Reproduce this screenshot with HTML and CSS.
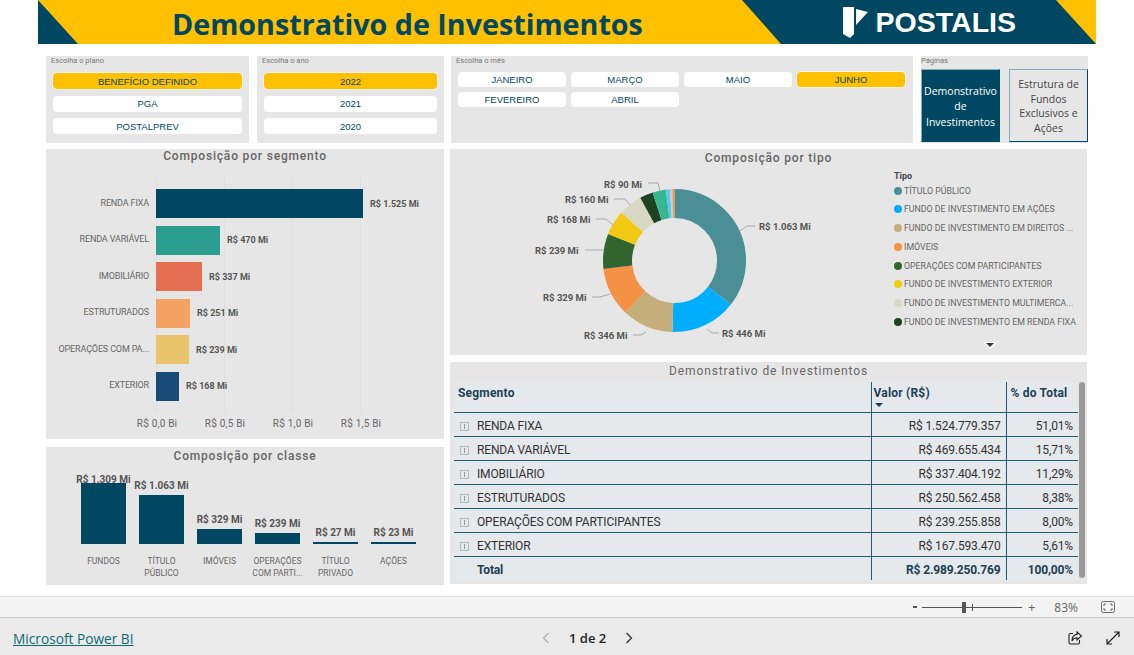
FILE: index.html
```html
<!DOCTYPE html>
<html lang="pt-BR">
<head>
    <meta charset="UTF-8">
    <title>Demonstrativo de Investimentos</title>
    <link rel="stylesheet" href="styles.css">
</head>
<body>
    <main class="report">
        <header class="banner">
            <svg class="banner-bg" viewBox="0 0 1058 44" width="1058" height="44">
                <polygon points="0,0 40,44 0,44" fill="#004761"/>
                <polygon points="704,0 1018,0 1058,44 743,44" fill="#004761"/>
            </svg>
            <h1>Demonstrativo de Investimentos</h1>
            <div class="logo">
                <svg width="26" height="31" viewBox="0 0 26 31">
                    <polygon points="0,0 11,0 11,27 7,31 0,27" fill="#fff"/>
                    <polygon points="13,2 25,5 13,18" fill="#fff"/>
                </svg>
                <span>POSTALIS</span>
            </div>
        </header>

        <section class="filters">
            <div class="box plano">
                <div class="box-label">Escolha o plano</div>
                <div class="slicer-col">
                    <button class="on">BENEFÍCIO DEFINIDO</button>
                    <button>PGA</button>
                    <button>POSTALPREV</button>
                </div>
            </div>
            <div class="box ano">
                <div class="box-label">Escolha o ano</div>
                <div class="slicer-col">
                    <button class="on">2022</button>
                    <button>2021</button>
                    <button>2020</button>
                </div>
            </div>
            <div class="box mes">
                <div class="box-label">Escolha o mês</div>
                <div class="slicer-grid">
                    <button>JANEIRO</button>
                    <button>MARÇO</button>
                    <button>MAIO</button>
                    <button class="on">JUNHO</button>
                    <button>FEVEREIRO</button>
                    <button>ABRIL</button>
                </div>
            </div>
            <div class="box paginas">
                <div class="box-label">Páginas</div>
                <div class="page-tabs">
                    <div class="tab active">Demonstrativo de Investimentos</div>
                    <div class="tab">Estrutura de Fundos Exclusivos e Ações</div>
                </div>
            </div>
        </section>

        <section class="columns">
            <div class="col-left">
                <div class="box segmento">
                    <h2>Composição por segmento</h2>
                    <div class="plot">
                        <div class="gridlines"><i></i><i></i><i></i><i></i></div>
                        <div class="hbar"><span class="cat">RENDA FIXA</span><b style="width:207px;background:#004761"></b><span class="val">R$ 1.525 Mi</span></div>
                        <div class="hbar"><span class="cat">RENDA VARIÁVEL</span><b style="width:64px;background:#2a9d8f"></b><span class="val">R$ 470 Mi</span></div>
                        <div class="hbar"><span class="cat">IMOBILIÁRIO</span><b style="width:46px;background:#e76f51"></b><span class="val">R$ 337 Mi</span></div>
                        <div class="hbar"><span class="cat">ESTRUTURADOS</span><b style="width:34px;background:#f4a261"></b><span class="val">R$ 251 Mi</span></div>
                        <div class="hbar"><span class="cat">OPERAÇÕES COM PA...</span><b style="width:33px;background:#e9c46a"></b><span class="val">R$ 239 Mi</span></div>
                        <div class="hbar"><span class="cat">EXTERIOR</span><b style="width:23px;background:#1a4b78"></b><span class="val">R$ 168 Mi</span></div>
                    </div>
                    <div class="axis">
                        <span>R$ 0,0 Bi</span><span>R$ 0,5 Bi</span><span>R$ 1,0 Bi</span><span>R$ 1,5 Bi</span>
                    </div>
                </div>
                <div class="box classe">
                    <h2>Composição por classe</h2>
                    <div class="vbars">
                        <div class="vbar tight"><span>R$ 1.309 Mi</span><b style="height:61px"></b></div>
                        <div class="vbar"><span>R$ 1.063 Mi</span><b style="height:49px"></b></div>
                        <div class="vbar"><span>R$ 329 Mi</span><b style="height:15px"></b></div>
                        <div class="vbar"><span>R$ 239 Mi</span><b style="height:11px"></b></div>
                        <div class="vbar"><span>R$ 27 Mi</span><b style="height:2px"></b></div>
                        <div class="vbar"><span>R$ 23 Mi</span><b style="height:2px"></b></div>
                    </div>
                    <div class="vcats">
                        <span>FUNDOS</span>
                        <span>TÍTULO PÚBLICO</span>
                        <span>IMÓVEIS</span>
                        <span>OPERAÇÕES COM PARTI...</span>
                        <span>TÍTULO PRIVADO</span>
                        <span>AÇÕES</span>
                    </div>
                </div>
            </div>

            <div class="col-right">
                <div class="box tipo">
                    <h2>Composição por tipo</h2>
                    <svg class="donut" width="440" height="206" viewBox="0 0 440 206">
                        <g fill="none" stroke-width="29" transform="rotate(-90 224.5 110.5)">
                            <circle cx="224.5" cy="110.5" r="57" pathLength="2989" stroke="#4a8f96" stroke-dasharray="1063 2989"/>
                            <circle cx="224.5" cy="110.5" r="57" pathLength="2989" stroke="#00aeff" stroke-dasharray="446 2989" stroke-dashoffset="-1063"/>
                            <circle cx="224.5" cy="110.5" r="57" pathLength="2989" stroke="#c4af7b" stroke-dasharray="346 2989" stroke-dashoffset="-1509"/>
                            <circle cx="224.5" cy="110.5" r="57" pathLength="2989" stroke="#f59145" stroke-dasharray="329 2989" stroke-dashoffset="-1855"/>
                            <circle cx="224.5" cy="110.5" r="57" pathLength="2989" stroke="#33662f" stroke-dasharray="239 2989" stroke-dashoffset="-2184"/>
                            <circle cx="224.5" cy="110.5" r="57" pathLength="2989" stroke="#f2ca13" stroke-dasharray="168 2989" stroke-dashoffset="-2423"/>
                            <circle cx="224.5" cy="110.5" r="57" pathLength="2989" stroke="#d9d9c3" stroke-dasharray="160 2989" stroke-dashoffset="-2591"/>
                            <circle cx="224.5" cy="110.5" r="57" pathLength="2989" stroke="#1f4222" stroke-dasharray="90 2989" stroke-dashoffset="-2751"/>
                            <circle cx="224.5" cy="110.5" r="57" pathLength="2989" stroke="#36b792" stroke-dasharray="90 2989" stroke-dashoffset="-2841"/>
                            <circle cx="224.5" cy="110.5" r="57" pathLength="2989" stroke="#5cc8f0" stroke-dasharray="27 2989" stroke-dashoffset="-2931"/>
                            <circle cx="224.5" cy="110.5" r="57" pathLength="2989" stroke="#c9ccc8" stroke-dasharray="17 2989" stroke-dashoffset="-2958"/>
                            <circle cx="224.5" cy="110.5" r="57" pathLength="2989" stroke="#f59145" stroke-dasharray="14 2989" stroke-dashoffset="-2975"/>
                        </g>
                        <g fill="none" stroke="#aaa">
                            <polyline points="290,81 297,76 305,76"/>
                            <polyline points="257,179 262,183 269,183"/>
                            <polyline points="196,182 191,185 183,185"/>
                            <polyline points="160,144 150,147 142,147"/>
                            <polyline points="153,100 135,100"/>
                            <polyline points="163,75 156,69 146,69"/>
                            <polyline points="180,55 175,49 164,49"/>
                            <polyline points="210,41 208,33 198,33"/>
                        </g>
                        <g class="slice-labels">
                            <text x="309" y="80">R$ 1.063 Mi</text>
                            <text x="272" y="187">R$ 446 Mi</text>
                            <text x="134" y="189">R$ 346 Mi</text>
                            <text x="93" y="151">R$ 329 Mi</text>
                            <text x="85" y="104">R$ 239 Mi</text>
                            <text x="97" y="73">R$ 168 Mi</text>
                            <text x="115" y="53">R$ 160 Mi</text>
                            <text x="154" y="38">R$ 90 Mi</text>
                        </g>
                    </svg>
                    <div class="legend">
                        <div class="legend-title">Tipo</div>
                        <ul>
                            <li><i style="background:#4a8f96"></i>TÍTULO PÚBLICO</li>
                            <li><i style="background:#00aeff"></i>FUNDO DE INVESTIMENTO EM AÇÕES</li>
                            <li><i style="background:#c4af7b"></i>FUNDO DE INVESTIMENTO EM DIREITOS ...</li>
                            <li><i style="background:#f59145"></i>IMÓVEIS</li>
                            <li><i style="background:#33662f"></i>OPERAÇÕES COM PARTICIPANTES</li>
                            <li><i style="background:#f2ca13"></i>FUNDO DE INVESTIMENTO EXTERIOR</li>
                            <li><i style="background:#d9d9c3"></i>FUNDO DE INVESTIMENTO MULTIMERCA...</li>
                            <li><i style="background:#1f4222"></i>FUNDO DE INVESTIMENTO EM RENDA FIXA</li>
                        </ul>
                        <svg class="legend-more" width="14" height="8" viewBox="0 0 14 8">
                            <polygon points="0,0 14,0 7,8" fill="#fff"/>
                            <polygon points="3,1 11,1 7,5" fill="#333"/>
                        </svg>
                    </div>
                </div>
                <div class="box demo">
                    <h2>Demonstrativo de Investimentos</h2>
                    <div class="table-wrap">
                        <table>
                            <thead>
                                <tr>
                                    <th class="c-seg">Segmento</th>
                                    <th class="c-val">Valor (R$)<svg class="sort" width="8" height="4" viewBox="0 0 8 4"><polygon points="0,0 8,0 4,4" fill="#1d3f55"/></svg></th>
                                    <th class="c-pct">% do Total</th>
                                </tr>
                            </thead>
                            <tbody>
                                <tr><td class="c-seg"><span class="expand"></span>RENDA FIXA</td><td class="c-val">R$ 1.524.779.357</td><td class="c-pct">51,01%</td></tr>
                                <tr><td class="c-seg"><span class="expand"></span>RENDA VARIÁVEL</td><td class="c-val">R$ 469.655.434</td><td class="c-pct">15,71%</td></tr>
                                <tr><td class="c-seg"><span class="expand"></span>IMOBILIÁRIO</td><td class="c-val">R$ 337.404.192</td><td class="c-pct">11,29%</td></tr>
                                <tr><td class="c-seg"><span class="expand"></span>ESTRUTURADOS</td><td class="c-val">R$ 250.562.458</td><td class="c-pct">8,38%</td></tr>
                                <tr><td class="c-seg"><span class="expand"></span>OPERAÇÕES COM PARTICIPANTES</td><td class="c-val">R$ 239.255.858</td><td class="c-pct">8,00%</td></tr>
                                <tr><td class="c-seg"><span class="expand"></span>EXTERIOR</td><td class="c-val">R$ 167.593.470</td><td class="c-pct">5,61%</td></tr>
                                <tr class="total"><td class="c-seg">Total</td><td class="c-val">R$ 2.989.250.769</td><td class="c-pct">100,00%</td></tr>
                            </tbody>
                        </table>
                        <div class="scrollbar"></div>
                    </div>
                </div>
            </div>
        </section>
    </main>

    <div class="zoom-bar">
        <span class="zoom-minus"></span>
        <div class="slider"><span class="tick"></span><span class="thumb"></span></div>
        <span class="zoom-plus">+</span>
        <span class="zoom-pct">83%</span>
        <svg class="fit" width="14" height="12" viewBox="0 0 14 12" fill="none" stroke="#666">
            <rect x="0.5" y="0.5" width="13" height="11" rx="2"/>
            <path d="M3 5V3H5M9 3H11V5M11 7V9H9M5 9H3V7"/>
        </svg>
    </div>

    <footer class="footer">
        <a class="pbi-link">Microsoft Power BI</a>
        <div class="pager">
            <svg width="8" height="12" viewBox="0 0 8 12" fill="none" stroke="#b5b5b5" stroke-width="1.3"><path d="M6.5 1L1.5 6L6.5 11"/></svg>
            <span>1 de 2</span>
            <svg width="8" height="12" viewBox="0 0 8 12" fill="none" stroke="#333" stroke-width="1.3"><path d="M1.5 1L6.5 6L1.5 11"/></svg>
        </div>
        <div class="footer-icons">
            <svg width="14" height="14" viewBox="0 0 14 14" fill="none" stroke="#222" stroke-width="1.1">
                <path d="M5 2.5H2.5A1.5 1.5 0 0 0 1 4V11.5A1.5 1.5 0 0 0 2.5 13H10A1.5 1.5 0 0 0 11.5 11.5V9"/>
                <path d="M9 1L13.5 5L9 9V6.8C6.5 6.8 5 8 4 10C4 6.5 6 3.8 9 3.4Z"/>
            </svg>
            <svg width="14" height="14" viewBox="0 0 14 14" fill="none" stroke="#222" stroke-width="1.2">
                <path d="M1 13L13 1M8 1H13V6M1 8V13H6"/>
            </svg>
        </div>
    </footer>
</body>
</html>
```

FILE: styles.css
```css
* {
    box-sizing: border-box;
}
html, body {
    margin: 0;
    height: 100%;
}
body {
    width: 1134px;
    height: 655px;
    overflow: hidden;
    display: flex;
    flex-direction: column;
    background-color: white;
    font-family: Roboto, sans-serif;
    color: #555;
}
.report {
    height: 596px;
}

/* Faixa do topo */
.banner {
    position: relative;
    width: 1058px;
    height: 44px;
    margin-left: 38px;
    background-color: #ffc000;
    display: flex;
    align-items: center;
}
.banner-bg {
    position: absolute;
    left: 0;
    top: 0;
}
.banner h1 {
    position: relative;
    margin: 2px 0 0 134px;
    font-family: "Open Sans", sans-serif;
    font-size: 28.7px;
    font-weight: 700;
    color: #004761;
    white-space: nowrap;
}
.logo {
    position: relative;
    margin-left: auto;
    margin-right: 80px;
    display: flex;
    align-items: center;
    gap: 7px;
}
.logo svg {
    margin-top: 1px;
}
.logo span {
    font-family: "Liberation Sans", sans-serif;
    font-size: 28.5px;
    font-weight: 700;
    color: white;
}

/* Filtros */
.box {
    background-color: #e6e6e6;
}
.filters {
    display: flex;
    height: 87px;
    margin: 12px 0 6px 46px;
}
.box-label {
    font-size: 7.5px;
    line-height: 9px;
    color: #777;
}
.filters button {
    height: 16px;
    padding: 0;
    border: none;
    border-radius: 4px;
    background-color: white;
    font-family: "Liberation Sans", sans-serif;
    font-size: 9.5px;
    color: #004761;
}
.filters button.on {
    background-color: #ffc000;
    box-shadow: 0 0 0 1px #f5f5f5;
}
.plano {
    width: 203px;
    padding: 0 7px 0 5px;
    margin-right: 8px;
}
.ano {
    width: 187px;
    padding: 0 7px 0 5px;
    margin-right: 7px;
}
.slicer-col {
    display: flex;
    flex-direction: column;
    gap: 6.5px;
    margin: 8px 0 0 2px;
}
.mes {
    width: 462px;
    padding-left: 5px;
    margin-right: 8px;
}
.slicer-grid {
    display: grid;
    grid-template-columns: repeat(4, 108px);
    grid-template-rows: 15px 15px;
    gap: 5px 5px;
    margin: 7px 0 0 2px;
}
.slicer-grid button {
    height: 15px;
}
.slicer-grid button:nth-child(5) {
    grid-column: 1;
    grid-row: 2;
}
.slicer-grid button:nth-child(6) {
    grid-column: 2;
    grid-row: 2;
}
.paginas {
    width: 167px;
}
.page-tabs {
    display: flex;
    justify-content: space-between;
    margin-top: 4px;
}
.tab {
    width: 79px;
    height: 73px;
    display: flex;
    align-items: center;
    justify-content: center;
    text-align: center;
    font-family: "Open Sans", sans-serif;
    font-size: 10.5px;
    line-height: 14.5px;
    color: #444;
    padding: 1px 5px 0;
    border: 1px solid #8aa9b5;
    border-bottom-color: #004761;
    border-right-color: #004761;
}
.tab.active {
    background-color: #004761;
    color: white;
    padding: 3px 2px 0;
    line-height: 15.5px;
}

/* Colunas principais */
.columns {
    display: flex;
    gap: 6px;
    margin-left: 46px;
}
.col-left {
    width: 398px;
    display: flex;
    flex-direction: column;
    gap: 8px;
}
.col-right {
    width: 637px;
    display: flex;
    flex-direction: column;
    gap: 7px;
}
h2 {
    margin: 0;
    text-align: center;
    font-size: 12px;
    line-height: 16px;
    font-weight: 500;
    letter-spacing: 0.82px;
    color: #666;
}

/* Barras horizontais */
.segmento {
    height: 290px;
}
.segmento h2 {
    margin-top: -1px;
}
.plot {
    position: relative;
    margin-top: 25px;
    display: flex;
    flex-direction: column;
    gap: 7.5px;
}
.gridlines {
    position: absolute;
    left: 110px;
    top: -13px;
    width: 205px;
    height: 237px;
    display: flex;
    justify-content: space-between;
}
.gridlines i {
    width: 0;
    border-left: 1px dotted #d8d8d8;
}
.hbar {
    position: relative;
    height: 29px;
    display: flex;
    align-items: center;
}
.hbar .cat {
    width: 103px;
    text-align: right;
    font-size: 9px;
    letter-spacing: -0.15px;
    padding-bottom: 2px;
    color: #666;
    white-space: nowrap;
    margin-right: 7px;
}
.hbar b {
    height: 29px;
    display: block;
}
.hbar .val {
    margin-left: 7px;
    font-size: 9px;
    font-weight: 700;
    color: #555;
}
.axis {
    display: flex;
    margin: 17px 0 0 77px;
}
.axis span {
    width: 68px;
    text-align: center;
    font-size: 10px;
    letter-spacing: 0.2px;
    color: #666;
}

/* Barras verticais */
.classe {
    height: 138px;
    padding-top: 1px;
}
.vbars {
    height: 75px;
    margin: 5px 0 0 35px;
    display: flex;
    gap: 13px;
    align-items: flex-end;
}
.vbar {
    width: 45px;
    display: flex;
    flex-direction: column;
    align-items: center;
}
.vbar span {
    font-size: 10px;
    font-weight: 700;
    line-height: 12px;
    white-space: nowrap;
    margin-bottom: 3px;
}
.vbar.tight span {
    margin-bottom: -3px;
    position: relative;
}
.vbar b {
    display: block;
    width: 45px;
    background-color: #004761;
}
.vcats {
    display: flex;
    gap: 3px;
    margin: 11px 0 0 30px;
}
.vcats span {
    width: 55px;
    text-align: center;
    font-size: 8.5px;
    line-height: 12px;
    color: #666;
}

/* Rosca */
.tipo {
    position: relative;
    height: 206px;
    padding-top: 1px;
    display: flex;
}
.tipo h2 {
    position: absolute;
    left: 0;
    right: 0;
    top: 1px;
}
.donut {
    flex: none;
}
.slice-labels text {
    font-family: Roboto, sans-serif;
    font-size: 9.5px;
    font-weight: 700;
    fill: #555;
}
.legend {
    margin: 21px 0 0 4px;
    width: 190px;
    display: flex;
    flex-direction: column;
}
.legend-title {
    font-size: 9px;
    font-weight: 700;
    line-height: 10px;
    color: #444;
}
.legend ul {
    list-style: none;
    margin: 4px 0 0;
    padding: 0;
    display: flex;
    flex-direction: column;
    gap: 7.8px;
}
.legend li {
    height: 11px;
    display: flex;
    align-items: center;
    font-size: 8.8px;
    color: #666;
    white-space: nowrap;
}
.legend li i {
    flex: none;
    width: 8px;
    height: 8px;
    border-radius: 50%;
    margin-right: 2px;
}
.legend-more {
    margin: 14px 0 0 89px;
}

/* Tabela */
.demo {
    height: 222px;
    position: relative;
}
.demo h2 {
    letter-spacing: 0.88px;
    font-weight: 400;
    line-height: 17px;
    padding-top: 1px;
    height: 17px;
}
.table-wrap {
    margin: 3px 0 0 4px;
    width: 631px;
    display: flex;
}
table {
    flex: none;
    width: 624px;
    height: 198px;
    table-layout: fixed;
    border-collapse: collapse;
    background-color: #e5e9ec;
    font-size: 12px;
    letter-spacing: -0.15px;
    color: #333;
}
th {
    height: 30px;
    padding: 0 4px 8px;
    text-align: left;
    font-size: 12px;
    font-weight: 700;
    color: #1d3f55;
    letter-spacing: 0.2px;
}
td {
    height: 24px;
    padding: 3px 5px 0 4px;
    white-space: nowrap;
    border-top: 1px solid #1d5c75;
}
th.c-val, td.c-val {
    border-left: 1px solid #1d5c75;
    border-right: 1px solid #1d5c75;
}
.c-seg {
    width: 417px;
}
.c-val {
    width: 135px;
    text-align: right;
}
th.c-val {
    position: relative;
    text-align: left;
    padding-left: 2px;
}
.c-pct {
    text-align: right;
}
th.c-pct {
    padding-left: 4px;
    text-align: left;
    white-space: nowrap;
}
.sort {
    position: absolute;
    left: 3px;
    top: 21px;
}
.expand {
    display: inline-block;
    width: 9px;
    height: 9px;
    margin: 0 8px 0 2px;
    vertical-align: -1px;
    border: 1px solid #b4b9bd;
    position: relative;
}
.expand::before {
    content: "";
    position: absolute;
    left: 3px;
    top: 1px;
    width: 1px;
    height: 5px;
    background-color: #999;
}
.total td {
    font-weight: 700;
    color: #1d3f55;
}
.total .c-seg {
    padding-left: 23px;
}
.scrollbar {
    flex: none;
    width: 6px;
    height: 196px;
    margin-left: 1px;
    border-radius: 3px;
    background-color: #9a9a9a;
}

/* Barra de zoom */
.zoom-bar {
    height: 22px;
    background-color: #f3f3f3;
    border-top: 1px solid #e0e0e0;
    border-bottom: 1px solid #c8c8c8;
    display: flex;
    align-items: center;
    padding-right: 19px;
    font-family: "Open Sans", sans-serif;
    color: #666;
}
.zoom-minus {
    margin-left: 913px;
    width: 4px;
    height: 2px;
    background-color: #555;
}
.slider {
    position: relative;
    width: 100px;
    height: 1px;
    margin-left: 5px;
    background-color: #555;
}
.thumb {
    position: absolute;
    left: 40px;
    top: -5px;
    width: 4px;
    height: 11px;
    background-color: #555;
}
.tick {
    position: absolute;
    left: 50px;
    top: -3px;
    width: 1px;
    height: 7px;
    background-color: #555;
}
.zoom-plus {
    margin-left: 6px;
    font-size: 13px;
    line-height: 13px;
}
.zoom-pct {
    margin-left: 19px;
    font-size: 12px;
}
.fit {
    margin-left: 23px;
}

/* Rodape */
.footer {
    flex: 1;
    position: relative;
    background-color: #eaeaea;
    display: flex;
    align-items: center;
    padding: 4px 13px 0;
}
.pbi-link {
    font-family: "Open Sans", sans-serif;
    font-size: 13.7px;
    color: #0f6a6f;
    text-decoration: underline;
}
.pager {
    position: absolute;
    left: 542px;
    top: 11px;
    display: flex;
    align-items: center;
    gap: 19px;
    font-family: "Open Sans", sans-serif;
    font-size: 13px;
    font-weight: 600;
    color: #252423;
}
.footer-icons {
    margin-left: auto;
    margin-right: 1px;
    margin-top: -2px;
    display: flex;
    gap: 24px;
}
```
